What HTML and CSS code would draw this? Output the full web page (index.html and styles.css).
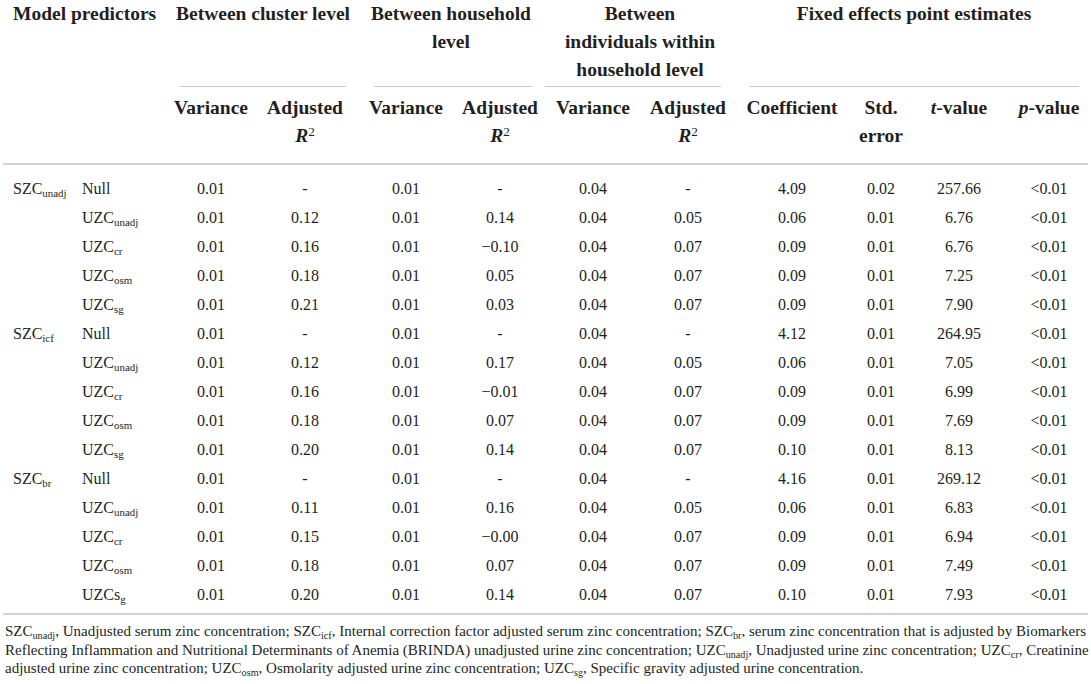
FILE: index.html
```html
<!DOCTYPE html>
<html lang="en">
<head>
<meta charset="utf-8">
<title>Multilevel model table</title>
<link rel="stylesheet" href="styles.css">
</head>
<body>
<table class="tbl">
  <colgroup>
    <col class="c-a"><col class="c-b"><col class="c-c"><col class="c-d"><col class="c-e"><col class="c-f">
    <col class="c-g"><col class="c-h"><col class="c-i"><col class="c-j"><col class="c-k"><col class="c-l">
  </colgroup>
  <thead>
    <tr class="h-top">
      <th colspan="2" class="h-model">Model predictors</th>
      <th colspan="2" class="h-group">Between cluster level</th>
      <th colspan="2" class="h-group">Between household<br>level</th>
      <th colspan="2" class="h-group">Between<br>individuals within<br>household level</th>
      <th colspan="4" class="h-group">Fixed effects point estimates</th>
    </tr>
    <tr class="h-rules">
      <th colspan="2"></th>
      <th colspan="2"><div class="rule r-cluster"></div></th>
      <th colspan="2"><div class="rule r-house"></div></th>
      <th colspan="2"><div class="rule r-indiv"></div></th>
      <th colspan="4"><div class="rule r-fixed"></div></th>
    </tr>
    <tr class="h-sub">
      <th></th><th></th>
      <th>Variance</th><th>Adjusted<br><i>R</i><sup>2</sup></th>
      <th>Variance</th><th>Adjusted<br><i>R</i><sup>2</sup></th>
      <th>Variance</th><th>Adjusted<br><i>R</i><sup>2</sup></th>
      <th>Coefficient</th><th>Std.<br>error</th><th><i>t</i>-value</th><th><i>p</i>-value</th>
    </tr>
  </thead>
  <tbody>
    <tr class="first"><td>SZC<sub>unadj</sub></td><td>Null</td><td>0.01</td><td>-</td><td>0.01</td><td>-</td><td>0.04</td><td>-</td><td>4.09</td><td>0.02</td><td>257.66</td><td>&lt;0.01</td></tr>
    <tr><td></td><td>UZC<sub>unadj</sub></td><td>0.01</td><td>0.12</td><td>0.01</td><td>0.14</td><td>0.04</td><td>0.05</td><td>0.06</td><td>0.01</td><td>6.76</td><td>&lt;0.01</td></tr>
    <tr><td></td><td>UZC<sub>cr</sub></td><td>0.01</td><td>0.16</td><td>0.01</td><td>−0.10</td><td>0.04</td><td>0.07</td><td>0.09</td><td>0.01</td><td>6.76</td><td>&lt;0.01</td></tr>
    <tr><td></td><td>UZC<sub>osm</sub></td><td>0.01</td><td>0.18</td><td>0.01</td><td>0.05</td><td>0.04</td><td>0.07</td><td>0.09</td><td>0.01</td><td>7.25</td><td>&lt;0.01</td></tr>
    <tr><td></td><td>UZC<sub>sg</sub></td><td>0.01</td><td>0.21</td><td>0.01</td><td>0.03</td><td>0.04</td><td>0.07</td><td>0.09</td><td>0.01</td><td>7.90</td><td>&lt;0.01</td></tr>
    <tr><td>SZC<sub>icf</sub></td><td>Null</td><td>0.01</td><td>-</td><td>0.01</td><td>-</td><td>0.04</td><td>-</td><td>4.12</td><td>0.01</td><td>264.95</td><td>&lt;0.01</td></tr>
    <tr><td></td><td>UZC<sub>unadj</sub></td><td>0.01</td><td>0.12</td><td>0.01</td><td>0.17</td><td>0.04</td><td>0.05</td><td>0.06</td><td>0.01</td><td>7.05</td><td>&lt;0.01</td></tr>
    <tr><td></td><td>UZC<sub>cr</sub></td><td>0.01</td><td>0.16</td><td>0.01</td><td>−0.01</td><td>0.04</td><td>0.07</td><td>0.09</td><td>0.01</td><td>6.99</td><td>&lt;0.01</td></tr>
    <tr><td></td><td>UZC<sub>osm</sub></td><td>0.01</td><td>0.18</td><td>0.01</td><td>0.07</td><td>0.04</td><td>0.07</td><td>0.09</td><td>0.01</td><td>7.69</td><td>&lt;0.01</td></tr>
    <tr><td></td><td>UZC<sub>sg</sub></td><td>0.01</td><td>0.20</td><td>0.01</td><td>0.14</td><td>0.04</td><td>0.07</td><td>0.10</td><td>0.01</td><td>8.13</td><td>&lt;0.01</td></tr>
    <tr><td>SZC<sub>br</sub></td><td>Null</td><td>0.01</td><td>-</td><td>0.01</td><td>-</td><td>0.04</td><td>-</td><td>4.16</td><td>0.01</td><td>269.12</td><td>&lt;0.01</td></tr>
    <tr><td></td><td>UZC<sub>unadj</sub></td><td>0.01</td><td>0.11</td><td>0.01</td><td>0.16</td><td>0.04</td><td>0.05</td><td>0.06</td><td>0.01</td><td>6.83</td><td>&lt;0.01</td></tr>
    <tr><td></td><td>UZC<sub>cr</sub></td><td>0.01</td><td>0.15</td><td>0.01</td><td>−0.00</td><td>0.04</td><td>0.07</td><td>0.09</td><td>0.01</td><td>6.94</td><td>&lt;0.01</td></tr>
    <tr><td></td><td>UZC<sub>osm</sub></td><td>0.01</td><td>0.18</td><td>0.01</td><td>0.07</td><td>0.04</td><td>0.07</td><td>0.09</td><td>0.01</td><td>7.49</td><td>&lt;0.01</td></tr>
    <tr class="last"><td></td><td>UZCs<sub>g</sub></td><td>0.01</td><td>0.20</td><td>0.01</td><td>0.14</td><td>0.04</td><td>0.07</td><td>0.10</td><td>0.01</td><td>7.93</td><td>&lt;0.01</td></tr>
  </tbody>
</table>
<p class="foot">
  <span class="fn-line">SZC<sub>unadj</sub>, Unadjusted serum zinc concentration; SZC<sub>icf</sub>, Internal correction factor adjusted serum zinc concentration; SZC<sub>br</sub>, serum zinc concentration that is adjusted by Biomarkers</span>
  <span class="fn-line">Reflecting Inflammation and Nutritional Determinants of Anemia (BRINDA) unadjusted urine zinc concentration; UZC<sub>unadj</sub>, Unadjusted urine zinc concentration; UZC<sub>cr</sub>, Creatinine</span>
  <span class="fn-line fn-last">adjusted urine zinc concentration; UZC<sub>osm</sub>, Osmolarity adjusted urine zinc concentration; UZC<sub>sg</sub>, Specific gravity adjusted urine concentration.</span>
</p>
</body>
</html>
```

FILE: styles.css
```css
html, body {
  margin: 0;
  padding: 0;
  background: #ffffff;
}

body {
  font-family: "Liberation Serif", "Times New Roman", serif;
  color: #231f20;
}

.tbl {
  margin-left: 3px;
  width: 1085px;
  table-layout: fixed;
  border-collapse: collapse;
  border-spacing: 0;
}

.c-a { width: 75px; }
.c-b { width: 86px; }
.c-c { width: 94px; }
.c-d { width: 94px; }
.c-e { width: 108px; }
.c-f { width: 80px; }
.c-g { width: 106px; }
.c-h { width: 84px; }
.c-i { width: 124px; }
.c-j { width: 54px; }
.c-k { width: 102px; }
.c-l { width: 78px; }

.tbl th {
  font-size: 19.5px;
  font-weight: bold;
  line-height: 28px;
  padding: 0;
  text-align: center;
  vertical-align: top;
  white-space: nowrap;
}

.h-top th {
  height: 84px;
}

.h-top .h-model {
  text-align: left;
  padding-left: 10px;
}

.h-top .h-group {
  padding-left: 10px;
}

.h-rules th {
  padding: 2px 0 7px 0;
  line-height: 0;
  height: 0;
}

.rule {
  border-top: 1px solid #c9c9c9;
  height: 0;
}

.r-cluster { margin: 0 6px 0 16px; }
.r-house { margin: 0 8px 0 22px; }
.r-indiv { margin: 0 9px 0 5px; }
.r-fixed { margin: 0 9px 0 19px; }

.h-sub th {
  padding-bottom: 13px;
  border-bottom: 2px solid #d2d2d2;
}

.tbl sup {
  font-size: 0.68em;
  vertical-align: 0.42em;
  line-height: 0;
  font-weight: normal;
}

.tbl th i {
  font-weight: bold;
}

.tbl td {
  font-size: 16px;
  line-height: 29px;
  height: 29px;
  padding: 0;
  text-align: center;
  vertical-align: middle;
  white-space: nowrap;
}

.tbl td:first-child {
  text-align: left;
  padding-left: 10px;
}

.tbl td:nth-child(2) {
  text-align: left;
  padding-left: 4px;
}

.tbl tr.first td {
  padding-top: 9px;
}

.tbl tr.last td {
  padding-bottom: 4px;
  border-bottom: 2px solid #d2d2d2;
}

sub {
  font-size: 0.68em;
  vertical-align: -0.28em;
  line-height: 0;
}

.foot {
  margin: 0 5px 0 5px;
  padding-top: 7px;
  font-size: 15px;
  line-height: 18.5px;
}

.fn-line {
  display: block;
  text-align: justify;
  text-align-last: justify;
  white-space: nowrap;
}

.fn-line.fn-last {
  text-align-last: left;
}
```
